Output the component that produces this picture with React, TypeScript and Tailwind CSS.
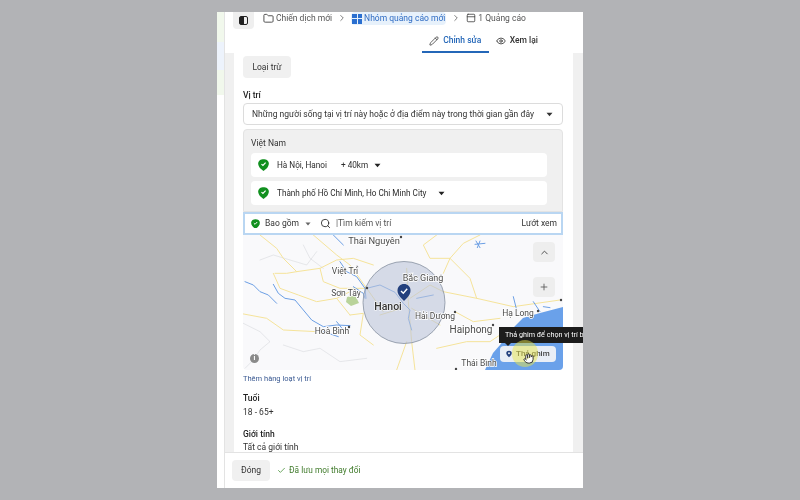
import { Check, ChevronRight, ChevronUp, Eye, Folder, Hand, PanelTop, Pencil, Plus, Search } from "lucide-react";

// traced from crops of the map, in 3x units
const roadsLeft = [
  "M60 0L110 40L130 70L170 110L240 100L290 75L340 70L400 90",
  "M105 115L140 115L170 110",
  "M100 115L120 160L175 180L230 200L290 190L330 170",
  "M0 235L80 250L130 285L230 290",
  "M240 100L250 140L300 160L380 160",
  "M330 240L370 235L360 300L400 330",
  "M220 0L290 60L330 90L380 160L430 230",
  "M290 190L330 240",
];
const roadsMid = [
  "M200 100L205 200L215 320L225 405",
  "M210 190L270 150L310 170",
  "M120 240L185 220",
  "M215 220L300 270",
  "M200 320L170 405",
];
const roadsRight = [
  "M110 0L70 30L90 70L150 70L190 25L240 0",
  "M150 70L130 115",
  "M130 170L230 190L340 215L480 195",
  "M165 230L220 260L300 250",
  "M110 340L200 320L270 320L300 300",
  "M230 190L210 130L150 70",
];
const riversLeft = [
  "M15 140L40 150L60 170L85 180L110 205",
  "M100 148L115 175L135 190L165 195L190 225L215 255L250 275L290 270L330 272",
  "M290 260L310 285",
  "M250 290L295 305",
  "M300 80L320 110L350 125L375 160L378 190",
  "M340 155L370 175L375 190",
  "M280 0L310 30",
];
const riversMid = [
  "M80 160L120 150L165 172L190 205L210 225L205 250L215 285",
  "M230 190L280 180",
];
const riversRight = [
  "M340 185L350 225",
  "M400 200L420 230",
  "M430 215L450 218",
  "M228 18L240 38M240 18L232 38M225 28L255 25",
];
const bordersLeft = [
  "M10 265L60 290L90 320L60 345L40 375L15 400",
  "M60 75L100 60L200 90L230 50",
  "M190 30L210 70L250 100",
  "M130 330L190 350L240 340L300 380L380 370",
];
const mapLabels = [
  { text: "Thái Nguyên", x: 131, y: 9, size: 9.3 },
  { text: "Việt Trì", x: 102, y: 39, size: 8.5 },
  { text: "Sơn Tây", x: 103, y: 61, size: 8.5 },
  { text: "Bắc Giang", x: 180, y: 46, size: 9 },
  { text: "Hải Dương", x: 192, y: 84, size: 8.5 },
  { text: "Hoà Bình", x: 89, y: 99, size: 8.5 },
  { text: "Hạ Long", x: 275, y: 81, size: 8.5 },
  { text: "Thái Bình", x: 236, y: 131, size: 8.5 },
];
const dots = [
  [158, 2], [114, 32], [124, 53], [106, 92], [198, 41], [212, 77], [250, 90], [295, 76], [318, 65], [213, 134],
];

function Caret({ className }: { className?: string }) {
  return (
    <svg viewBox="0 0 8 5" className={className} fill="currentColor">
      <path d="M0.6 0.4h6.8L4 4.6z" />
    </svg>
  );
}

function GreenPin({ size = 11 }: { size?: number }) {
  return (
    <svg width={size} height={size * 1.1} viewBox="0 0 12 13.2">
      <path d="M6 0.2C9 0.2 11.8 1.6 11.8 5C11.8 8.6 8.6 11.6 6 13C3.4 11.6 0.2 8.6 0.2 5C0.2 1.6 3 0.2 6 0.2Z" fill="#11901f" />
      <path d="M3.8 5.6L5.4 7.1L8.3 4" fill="none" stroke="#fff" strokeWidth="1.3" />
    </svg>
  );
}

function LocationRow({ name, radius }: { name: string; radius?: string }) {
  return (
    <div className="h-6 bg-white rounded flex items-center pl-[7px] text-[8.2px] text-[#2c2c2c]">
      <GreenPin size={11} />
      <span className="ml-2">{name}</span>
      {radius && <span className="ml-[14px]">{radius}</span>}
      <Caret className={`w-[7px] h-[5px] text-[#222] ${radius ? "ml-[6px]" : "ml-[12px]"}`} />
    </div>
  );
}

function MapPanel() {
  return (
    <div className="relative h-[135px] rounded-b">
      <svg viewBox="0 0 320 135" className="block w-full h-full bg-[#f9f9fb] rounded-b">
        <path d="M242 135L250 118L257 110L270 93L280 83L297 78L320 72V135Z" fill="#6aa1ea" />
        <path d="M104 62L112 60L116 68L108 71L103 67Z" fill="#b9d39a" />
        <g fill="none" strokeLinejoin="round" strokeLinecap="round">
          <g transform="translate(-3 0) scale(0.3333)">
            {bordersLeft.map((d) => <path key={d} d={d} stroke="#c8c9ce" strokeWidth="1.2" />)}
            {roadsLeft.map((d) => <path key={d} d={d} stroke="#f5e39a" strokeWidth="3" />)}
            {riversLeft.map((d) => <path key={d} d={d} stroke="#6b9fe4" strokeWidth="3" />)}
          </g>
          <g transform="translate(97 0) scale(0.3333)">
            {roadsMid.map((d) => <path key={d} d={d} stroke="#f5e39a" strokeWidth="3" />)}
            {riversMid.map((d) => <path key={d} d={d} stroke="#6b9fe4" strokeWidth="3" />)}
          </g>
          <g transform="translate(157 0) scale(0.3333)">
            {roadsRight.map((d) => <path key={d} d={d} stroke="#f5e39a" strokeWidth="3" />)}
            {riversRight.map((d) => <path key={d} d={d} stroke="#6b9fe4" strokeWidth="3" />)}
          </g>
        </g>
        <circle cx="161" cy="67.500" r="41" fill="#bcc5db" fillOpacity="0.6" stroke="#87909f" strokeWidth="0.8" />
        {dots.map(([cx, cy]) => (
          <circle key={cx} cx={cx} cy={cy} r="1.2" fill="#444" />
        ))}
        {mapLabels.map((l) => (
          <text key={l.text} x={l.x} y={l.y} fontSize={l.size} fill="#4a4a4a" textAnchor="middle" stroke="#fff" strokeWidth="1.5" paintOrder="stroke">
            {l.text}
          </text>
        ))}
        <text x="145" y="75" fontSize="10.500" fontWeight="500" fill="#333" textAnchor="middle" stroke="#fff" strokeWidth="1" paintOrder="stroke">Hanoi</text>
        <text x="228" y="98" fontSize="10" fill="#4a4a4a" textAnchor="middle" stroke="#fff" strokeWidth="1.5" paintOrder="stroke">Haiphong</text>
        <g transform="translate(0 -1)">
          <path d="M161 67C157 63 154.500 60.500 154.500 56.500C154.500 52.500 157.500 50 161 50C164.500 50 167.500 52.500 167.500 56.500C167.500 60.500 165 63 161 67Z" fill="#23407d" />
          <path d="M158 57L160.300 59.200L164.200 54.800" fill="none" stroke="#fff" strokeWidth="1.4" />
        </g>
      </svg>

      <div className="absolute left-[290px] top-[7px] w-[22px] h-5 rounded bg-[#eeeeee] flex items-center justify-center">
        <ChevronUp size={11} className="text-[#444]" />
      </div>
      <div className="absolute left-[290px] top-[42px] w-[22px] h-5 rounded bg-[#eeeeee] flex items-center justify-center">
        <Plus size={10} className="text-[#555]" />
      </div>
      <div className="absolute left-[7px] top-[119px] w-[9px] h-[9px] rounded-full bg-[#8a8a8a] text-white text-[7px] font-bold leading-[9px] text-center">i</div>

      <div className="absolute left-[256px] top-[92px] w-[84px] h-4 bg-[#1c1c1c] overflow-hidden text-white text-[7.2px] leading-4 pl-[6px] whitespace-nowrap">
        Thả ghim để chọn vị trí bản đồ
      </div>
      <div className="absolute left-[262px] top-[108px] border-x-[3px] border-x-transparent border-t-[3px] border-t-[#1c1c1c]" />
      <div className="absolute left-[257px] top-[111px] w-[56px] h-4 bg-[#e9eef6] rounded-sm flex items-center pl-[6px] text-[8px] font-medium text-[#444]">
        <svg width="6" height="8" viewBox="0 0 12 14" className="mr-[4px]">
          <path d="M6 0.500C9 0.500 11.500 2 11.500 5.200C11.500 8.500 9 11 6 13.500C3 11 0.500 8.500 0.500 5.200C0.500 2 3 0.500 6 0.500Z" fill="#23407d" />
          <circle cx="6" cy="5.500" r="1.800" fill="#fff" />
        </svg>
        Thả ghim
      </div>
      <div className="absolute left-[269px] top-[105px] w-[26px] h-[27px] rounded-full bg-[#e8e64a]/50" />
      <Hand size={11} className="absolute left-[280px] top-[118px] text-[#222] fill-white" />
    </div>
  );
}

export default function App() {
  return (
    <div className="w-[800px] h-[500px] bg-[#b2b3b6] flex justify-center pt-3 overflow-hidden" style={{ fontFamily: "Roboto, 'Noto Sans', sans-serif" }}>
      <div className="w-[366px] h-[476px] bg-white flex overflow-hidden blur-[0.4px]">
        <div className="w-2 border-r border-[#e3e3e3] flex flex-col shrink-0">
          <div className="h-[30px] bg-[#f1f8ec]" />
          <div className="h-7 bg-[#edf3fc]" />
          <div className="h-[25px] bg-[#f1f8ec]" />
        </div>

        <div className="flex-1 min-w-0 flex flex-col">
          <header className="h-[41px] shrink-0 relative">
            <div className="flex items-start h-[17px] pl-2 text-[8.5px] leading-[13px] text-[#555]">
              <div className="w-[21px] h-[17px] bg-[#efefef] rounded-b flex items-center justify-center">
                <span className="w-[9px] h-[9px] rounded-[2px] border border-[#222] flex">
                  <span className="w-1/2 bg-[#222]" />
                </span>
              </div>
              <Folder size={11} className="ml-[9px] mt-[1px] text-[#444]" />
              <span className="ml-[2px]">Chiến dịch mới</span>
              <ChevronRight size={10} className="ml-[5px] mt-[1px] text-[#666]" />
              <span className="ml-[4px] h-[13px] bg-[#e7f1fb] rounded-sm flex items-center px-[1px] text-[#2f6cc4]">
                <span className="grid grid-cols-2 gap-[1px] w-[10px] mr-[2px]">
                  <i className="h-[4.500px] bg-[#2a6fd0]" />
                  <i className="h-[4.500px] bg-[#2a6fd0]" />
                  <i className="h-[4.500px] bg-[#2a6fd0]" />
                  <i className="h-[4.500px] bg-[#2a6fd0]" />
                </span>
                Nhóm quảng cáo mới
              </span>
              <ChevronRight size={10} className="ml-[5px] mt-[1px] text-[#666]" />
              <PanelTop size={10} className="ml-[5px] mt-[1px] text-[#444]" />
              <span className="ml-[2px]">1 Quảng cáo</span>
            </div>
            <div className="flex justify-end items-start pr-[45px] text-[8.5px] font-medium text-[#333] mt-[1px]">
              <div className="w-[67px] h-[23px] border-b-2 border-[#2467b8] flex items-center justify-center text-[#2467b8]">
                <Pencil size={10} className="mr-[4px] text-[#444]" />
                Chỉnh sửa
              </div>
              <div className="flex items-center h-[21px] ml-[7px]">
                <Eye size={10} className="mr-[4px] text-[#333]" />
                Xem lại
              </div>
            </div>
          </header>

          <div className="flex-1 min-h-0 bg-[#f0f0f0] pl-[9px] pr-[10px] overflow-hidden">
            <div className="bg-white pl-[9px] pr-[10px] pt-[3px] pb-6">
              <div className="w-12 h-[22px] bg-[#f0f0f0] rounded flex items-center justify-center text-[8.5px] text-[#333]">Loại trừ</div>
              <div className="mt-3 text-[8.5px] font-medium text-[#222] leading-[11px]">Vị trí</div>
              <div className="mt-[2px] h-[22px] border border-[#dcdcdc] rounded flex items-center justify-between pl-2 pr-[9px] text-[8.5px] text-[#333] whitespace-nowrap">
                <span>Những người sống tại vị trí này hoặc ở địa điểm này trong thời gian gần đây</span>
                <Caret className="w-[7px] h-[5px] text-[#333]" />
              </div>

              <div className="mt-1 rounded-t border border-[#e3e3e3] bg-[#f0f0f0] pl-[7px] pr-[15px] pb-[6px]">
                <div className="h-[23px] pt-[3px] flex items-center text-[8.5px] text-[#333]">Việt Nam</div>
                <div className="flex flex-col gap-1">
                  <LocationRow name="Hà Nội, Hanoi" radius="+ 40km" />
                  <LocationRow name="Thành phố Hồ Chí Minh, Ho Chi Minh City" />
                </div>
              </div>

              <div className="h-[23px] border-2 border-[#b9d6f2] bg-white flex items-center pl-[6px] pr-1 text-[8.5px] text-[#333] relative">
                <GreenPin size={9} />
                <span className="ml-[5px]">Bao gồm</span>
                <Caret className="w-[6px] h-1 ml-[6px] text-[#666]" />
                <Search size={11} className="ml-[9px] text-[#333]" />
                <span className="ml-[5px] text-[#555]">|Tìm kiếm vị trí</span>
                <span className="ml-auto">Lướt xem</span>
              </div>

              <MapPanel />

              <div className="mt-1 text-[7.5px] leading-[10px] text-[#3b5a92]">Thêm hàng loạt vị trí</div>
              <div className="mt-2 text-[8.5px] leading-[12px] font-medium text-[#222]">Tuổi</div>
              <div className="mt-[2px] text-[8.5px] leading-[12px] text-[#333]">18 - 65+</div>
              <div className="mt-[10px] text-[8.5px] leading-[12px] font-medium text-[#222]">Giới tính</div>
              <div className="mt-[1px] text-[8.5px] leading-[12px] text-[#333]">Tất cả giới tính</div>
            </div>
          </div>

          <footer className="h-9 shrink-0 border-t border-[#e3e3e3] flex items-center pl-[7px] bg-white">
            <div className="w-[38px] h-[21px] bg-[#f0f0f0] rounded flex items-center justify-center text-[8.5px] text-[#333]">Đóng</div>
            <Check size={9} className="ml-[7px] text-[#3d8b2f]" />
            <span className="ml-[3px] text-[8.3px] text-[#3f7a2a]">Đã lưu mọi thay đổi</span>
          </footer>
        </div>
      </div>
    </div>
  );
}
